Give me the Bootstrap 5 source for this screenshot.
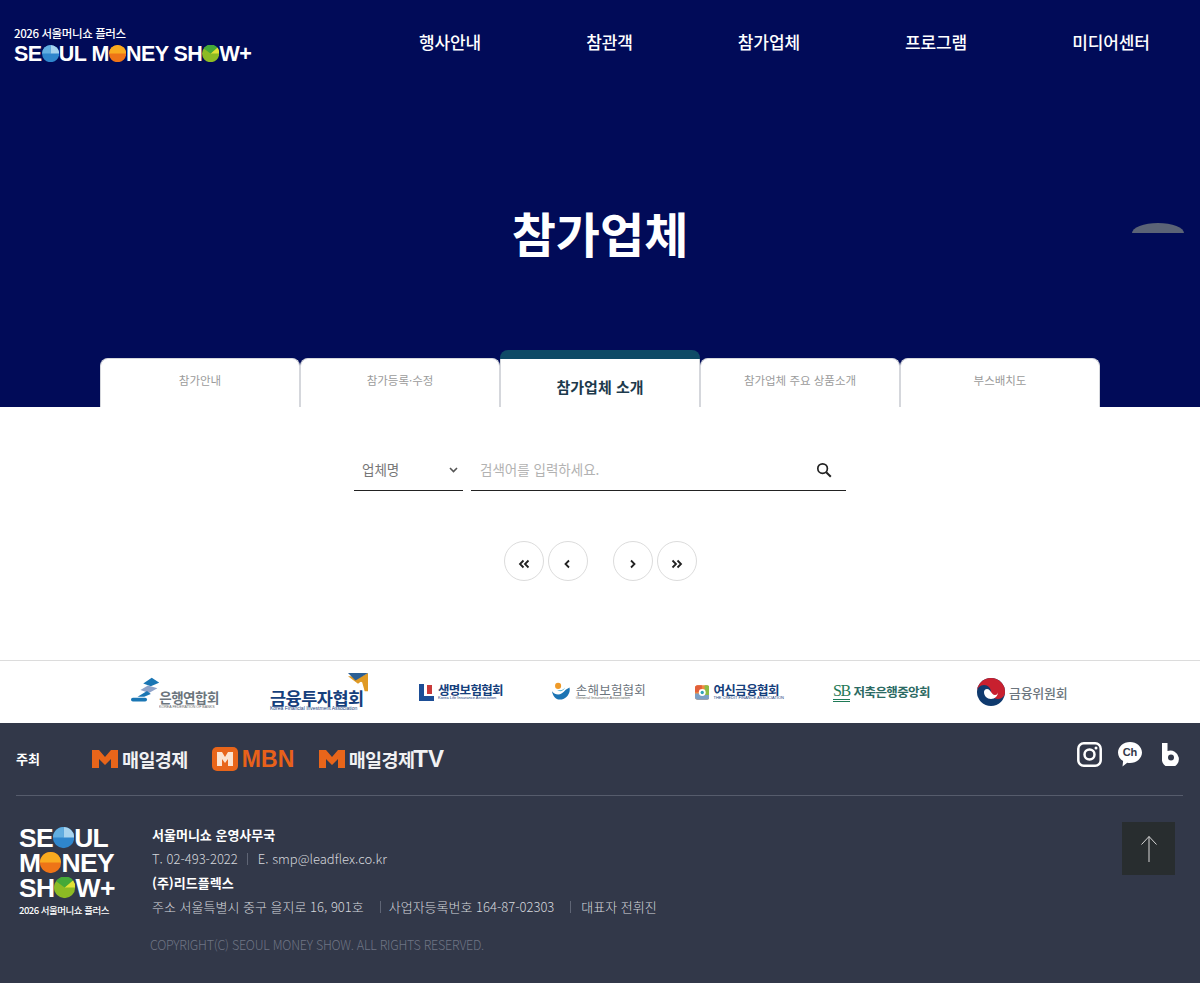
<!DOCTYPE html>
<html lang="ko">
<head>
  <meta charset="UTF-8">
  <meta name="viewport" content="width=device-width, initial-scale=1.0">
  <title>참가업체 소개 - 서울머니쇼 플러스</title>
  <link href="https://cdn.jsdelivr.net/npm/bootstrap@5.3.0/dist/css/bootstrap.min.css" rel="stylesheet">
  <style>
    body {
      font-family: "Noto Sans CJK KR", "Noto Sans", sans-serif;
      background-color: #fff;
      overflow-x: hidden;
    }
    .hero {
      position: relative;
      height: 407px;
      background-color: #010b58;
      color: #fff;
    }
    .top-bar {
      height: 84px;
      padding-left: 14px;
    }
    .brand-logo {
      width: 405px;
      padding-top: 28px;
      line-height: 1;
    }
    .brand-sub {
      font-size: 11.5px;
      font-weight: 500;
      letter-spacing: -.4px;
      height: 14px;
    }
    .word {
      font-family: "Liberation Sans", sans-serif;
      font-weight: 700;
      white-space: nowrap;
    }
    .brand-word {
      font-size: 21.5px;
      letter-spacing: -.55px;
      margin-top: 2px;
    }
    .word svg {
      width: .8em;
      height: .8em;
      vertical-align: -.06em;
    }
    .top-menu {
      gap: 105px;
      padding-top: 30px;
    }
    .top-menu a {
      color: #fff;
      font-size: 17px;
      font-weight: 500;
      line-height: 24px;
      text-decoration: none;
      letter-spacing: -.1px;
    }
    .hero-title {
      margin: 109px 0 0;
      font-size: 48px;
      line-height: 78px;
      font-weight: 700;
      text-align: center;
    }
    .hero-dome {
      position: absolute;
      top: 223px;
      left: 1132px;
      width: 52px;
      height: 10px;
      border-radius: 50% 50% 0 0 / 100% 100% 0 0;
      background-color: #5b6376;
    }
    .tab-row {
      position: absolute;
      left: 100px;
      right: 100px;
      bottom: 0;
      align-items: flex-end;
    }
    .tab-item {
      width: 200px;
      height: 49px;
      padding-bottom: 4px;
      border: 1px solid #d5d7dc;
      border-bottom: 0;
      border-radius: 8px 8px 0 0;
      background-color: #fff;
      color: #9b9b9b;
      font-size: 11.5px;
      text-decoration: none;
    }
    .tab-item.on {
      position: relative;
      padding: 8px 0 0;
      color: #1d3a4c;
      font-size: 15px;
      font-weight: 700;
      border-radius: 0;
    }
    .tab-item.on::before {
      content: "";
      position: absolute;
      left: -1px;
      right: -1px;
      top: -9px;
      height: 9px;
      border-radius: 8px 8px 0 0;
      background-color: #0e4a66;
    }
    .page-body {
      height: 254px;
      border-bottom: 1px solid #dcdcdc;
      padding-top: 42px;
    }
    .search-row {
      gap: 8px;
      height: 42px;
    }
    .kind-select {
      width: 109px;
      padding-left: 8px;
      padding-right: 5px;
      border-bottom: 1px solid #222;
      color: #777;
      font-size: 13.5px;
    }
    .word-input {
      width: 375px;
      padding: 0 14px 0 9px;
      border-bottom: 1px solid #222;
    }
    .word-input input {
      border: 0;
      outline: 0;
      padding: 0;
      background: transparent;
      font-size: 13.5px;
      color: #333;
    }
    .word-input input::placeholder {
      color: #b2b2b2;
      opacity: 1;
    }
    .pager {
      margin-top: 50px;
    }
    .pager-btn {
      width: 40px;
      height: 40px;
      padding: 0;
      border: 1px solid #dcdcdc;
      border-radius: 50%;
      background-color: #fff;
    }
    .pager-gap {
      width: 17px;
    }
    .org-strip {
      height: 62px;
      gap: 49px;
      padding-left: 131px;
    }
    .org-logo {
      height: 62px;
      flex: none;
      white-space: nowrap;
      line-height: 1;
    }
    .org-name {
      font-weight: 700;
      letter-spacing: -.5px;
    }
    .org-en {
      font-family: "Liberation Sans", sans-serif;
      font-size: 4px;
      letter-spacing: 0;
      color: #666;
      white-space: nowrap;
    }
    .site-footer {
      position: relative;
      height: 260px;
      padding: 0 17px 0 16px;
      background-color: #323849;
      color: #d5d7dc;
    }
    .host-row {
      height: 73px;
      border-bottom: 1px solid #565c6c;
    }
    .host-label {
      width: 76px;
      font-size: 13px;
      font-weight: 700;
      color: #fff;
    }
    .host-logo {
      margin-right: 24px;
      color: #f1f1f3;
      font-size: 18.5px;
      font-weight: 700;
      letter-spacing: -.6px;
      line-height: 24px;
    }
    .host-logo svg {
      margin-right: 4px;
    }
    .mbn-word {
      font-family: "Liberation Sans", sans-serif;
      font-size: 23px;
      font-weight: 700;
      letter-spacing: .2px;
      color: #e8611a;
    }
    .tv-word {
      font-family: "Liberation Sans", sans-serif;
      font-size: 24px;
      letter-spacing: 0;
      margin-left: -1px;
    }
    .social-row {
      position: absolute;
      top: 19px;
      right: 20px;
      gap: 16px;
    }
    .foot-main {
      padding-top: 27px;
    }
    .foot-logo {
      width: 136px;
      padding: 3px 0 0 3px;
      color: #fff;
    }
    .foot-word {
      font-size: 26.5px;
      line-height: 25px;
      letter-spacing: -.7px;
    }
    .foot-sub {
      margin-top: 3px;
      font-size: 9.5px;
      font-weight: 500;
      letter-spacing: -.5px;
      line-height: 13px;
    }
    .foot-info {
      font-size: 13px;
      line-height: 24px;
      font-weight: 300;
      white-space: nowrap;
    }
    .foot-info strong {
      display: block;
      color: #fff;
      font-weight: 700;
    }
    .split {
      display: inline-block;
      width: 1px;
      height: 12px;
      margin: 0 10px 0 9px;
      background-color: #5f6575;
      vertical-align: -1px;
    }
    .copy-line {
      margin-top: 14px;
      color: #6f7585;
      font-size: 12.5px;
      letter-spacing: -.25px;
      margin-left: -2px;
    }
    .top-btn {
      position: absolute;
      top: 99px;
      left: 1122px;
      width: 53px;
      height: 53px;
      padding: 0;
      border: 0;
      background-color: #282d2f;
    }
  </style>
</head>
<body>
  <svg width="0" height="0" class="d-block">
    <defs>
      <symbol id="pieBlue" viewBox="0 0 20 20">
        <circle cx="10" cy="10" r="10" fill="#2f86cc"/>
        <path d="M10 10V0a10 10 0 0 1 10 10z" fill="#a8d4ee"/>
        <path d="M10 10H0a10 10 0 0 1 10-10z" fill="#62aee0"/>
      </symbol>
      <symbol id="pieOrange" viewBox="0 0 20 20">
        <circle cx="10" cy="10" r="10" fill="#ee7417"/>
        <path d="M0 10a10 10 0 0 1 20 0z" fill="#f9ab1f"/>
      </symbol>
      <symbol id="pieGreen" viewBox="0 0 20 20">
        <circle cx="10" cy="10" r="10" fill="#8dbb24"/>
        <path d="M10 10L18 3a10 10 0 0 1 2 7z" fill="#e0e236"/>
        <path d="M10 10L18 3a10 10 0 0 0-16 1z" fill="#45a938"/>
      </symbol>
      <symbol id="mMark" viewBox="0 0 26 18">
        <path d="M0 0h7l6 7 6-7h7v18h-7V9l-6 6-6-6v9H0z" fill="#e8651a"/>
      </symbol>
    </defs>
  </svg>

  <header class="hero">
    <div class="top-bar d-flex">
      <div class="brand-logo">
        <div class="brand-sub">2026 서울머니쇼 플러스</div>
        <div class="word brand-word">SE<svg><use href="#pieBlue"/></svg>UL M<svg><use href="#pieOrange"/></svg>NEY SH<svg><use href="#pieGreen"/></svg>W+</div>
      </div>
      <nav class="top-menu d-flex">
        <a href="#">행사안내</a>
        <a href="#">참관객</a>
        <a href="#">참가업체</a>
        <a href="#">프로그램</a>
        <a href="#">미디어센터</a>
      </nav>
    </div>
    <h1 class="hero-title">참가업체</h1>
    <div class="hero-dome"></div>
    <div class="tab-row d-flex">
      <a href="#" class="tab-item d-flex align-items-center justify-content-center">참가안내</a>
      <a href="#" class="tab-item d-flex align-items-center justify-content-center">참가등록·수정</a>
      <a href="#" class="tab-item on d-flex align-items-center justify-content-center">참가업체 소개</a>
      <a href="#" class="tab-item d-flex align-items-center justify-content-center">참가업체 주요 상품소개</a>
      <a href="#" class="tab-item d-flex align-items-center justify-content-center">부스배치도</a>
    </div>
  </header>

  <main class="page-body">
    <form class="search-row d-flex justify-content-center">
      <div class="kind-select d-flex align-items-center justify-content-between">
        <span>업체명</span>
        <svg width="9" height="6" viewBox="0 0 9 6"><path d="M1 1l3.5 3.5L8 1" fill="none" stroke="#555" stroke-width="1.6"/></svg>
      </div>
      <div class="word-input d-flex align-items-center justify-content-between">
        <input type="text" class="flex-grow-1" placeholder="검색어를 입력하세요.">
        <svg width="16" height="16" viewBox="0 0 16 16"><circle cx="6.6" cy="6.6" r="4.8" fill="none" stroke="#222" stroke-width="1.7"/><path d="M10.2 10.2l4.6 4.6" stroke="#222" stroke-width="2"/></svg>
      </div>
    </form>
    <div class="pager d-flex justify-content-center gap-1">
      <button type="button" class="pager-btn" aria-label="처음"><svg width="12" height="10" viewBox="0 0 12 10"><path d="M5.5 1.5L2 5l3.5 3.5M10.5 1.5L7 5l3.5 3.5" fill="none" stroke="#222" stroke-width="1.8"/></svg></button>
      <button type="button" class="pager-btn" aria-label="이전"><svg width="7" height="10" viewBox="0 0 7 10"><path d="M5 1.5L1.5 5 5 8.5" fill="none" stroke="#222" stroke-width="1.8"/></svg></button>
      <span class="pager-gap"></span>
      <button type="button" class="pager-btn" aria-label="다음"><svg width="7" height="10" viewBox="0 0 7 10"><path d="M2 1.5L5.5 5 2 8.5" fill="none" stroke="#222" stroke-width="1.8"/></svg></button>
      <button type="button" class="pager-btn" aria-label="마지막"><svg width="12" height="10" viewBox="0 0 12 10"><path d="M1.5 1.5L5 5 1.5 8.5M6.5 1.5L10 5 6.5 8.5" fill="none" stroke="#222" stroke-width="1.8"/></svg></button>
    </div>
  </main>

  <section class="org-strip d-flex align-items-center">
    <div class="org-logo d-flex align-items-center" style="width:90px">
      <svg width="30" height="36" viewBox="0 0 30 36" class="me-n1 flex-none"><path d="M13 9L22 3l8 5-9 4z" fill="#1a76b4"/><path d="M10 16l8-5 10 3-9 5z" fill="#8fa3c9"/><path d="M7 23l10-6 4 3-7 3z" fill="#1a76b4"/><rect x="0" y="24" width="17" height="4" rx="2" fill="#1a76b4"/></svg>
      <div class="ms-n1 pt-3"><div class="org-name text-secondary" style="font-size:13.5px">은행연합회</div><div class="org-en" style="transform:scale(.9);transform-origin:left">KOREA FEDERATION OF BANKS</div></div>
    </div>
    <div class="org-logo d-flex align-items-center position-relative" style="width:100px">
      <div class="pt-3"><div class="org-name" style="font-size:17.5px;color:#16407c">금융투자협회</div><div class="org-en" style="color:#16407c;font-size:5px">Korea Financial Investment Association</div></div>
      <svg width="24" height="24" viewBox="0 0 24 24" class="position-absolute top-0 end-0 mt-2 pt-1" style="overflow:visible"><path d="M0 4h24L12 13z" fill="#e09a24"/><path d="M24 0L9 8l8 3 3 11h4z" fill="#e09a24"/><path d="M0 0h24L9 9z" fill="#2b5f94"/></svg>
    </div>
    <div class="org-logo d-flex align-items-center" style="width:84px">
      <svg width="15" height="17" viewBox="0 0 15 17" class="me-1"><path d="M0 0h5v12h10v5H0z" fill="#1d4e96"/><rect x="8" y="1" width="5" height="9" fill="#c93a3a"/></svg>
      <div><div class="org-name" style="font-size:12.5px;color:#16407c;letter-spacing:-.7px">생명보험협회</div><div class="org-en" style="color:#16407c">Korea Life Insurance Association</div></div>
    </div>
    <div class="org-logo d-flex align-items-center" style="width:94px">
      <svg width="26" height="26" viewBox="0 0 26 26" class="me-1"><circle cx="8" cy="5" r="4" fill="#ef9a28"/><path d="M0 12c5 6 12 6 18-2l5-3c2 8-5 16-13 16-5 0-9-5-10-11z" fill="#1b74b4"/><path d="M7 10c4 2 8 0 10-3-1 4-7 7-10 3z" fill="#3aa6cc"/></svg>
      <div><div class="org-name text-secondary fw-normal" style="font-size:12.5px;letter-spacing:.2px">손해보험협회</div><div class="org-en">General Insurance Association</div></div>
    </div>
    <div class="org-logo d-flex align-items-center" style="width:89px">
      <svg width="21" height="21" viewBox="0 0 21 21" class="me-1"><rect width="21" height="21" rx="4" fill="#f08b3e"/><path d="M0 12h21v5a4 4 0 0 1-4 4H4a4 4 0 0 1-4-4z" fill="#7c9fc4"/><path d="M0 4a4 4 0 0 1 4-4h6v10H0z" fill="#e2603a"/><path d="M14 0h3a4 4 0 0 1 4 4v10h-7z" fill="#8dbb44"/><circle cx="10.5" cy="10.5" r="5" fill="#fff"/><circle cx="10.5" cy="10.5" r="2.4" fill="#2fa3b5"/></svg>
      <div><div class="org-name" style="font-size:12.5px;color:#16407c;letter-spacing:-.6px">여신금융협회</div><div class="org-en" style="color:#16407c">THE CREDIT FINANCE ASSOCIATION</div></div>
    </div>
    <div class="org-logo d-flex align-items-center" style="width:95px">
      <div class="word text-center me-1" style="font-family:'Liberation Serif',serif;font-size:16px;font-weight:400;color:#1f7a56;line-height:16px;border-bottom:3px double #1f7a56;letter-spacing:-1.5px">SB</div>
      <div class="org-name" style="font-size:12.5px;color:#2b6a63;letter-spacing:-.6px">저축은행중앙회</div>
    </div>
    <div class="org-logo d-flex align-items-center" style="width:91px">
      <svg width="28" height="28" viewBox="0 0 28 28" class="me-1"><circle cx="14" cy="14" r="14" fill="#0f3a6e"/><path d="M0 14a14 14 0 0 1 28 0c0 4-3 7-7 7s-7-3-7-7-3-7-7-7-7 3-7 7z" fill="#c8202f"/><circle cx="21" cy="14" r="7" fill="#fff" opacity="0"/><path d="M7 14c0-1.500 1-3 3-3s3 1.500 4 3 2 3 4 3 3-1.500 3-3c0 4-3 7-7 7s-7-3-7-7z" fill="#fff"/></svg>
      <div class="org-name text-secondary fw-medium" style="font-size:13px;letter-spacing:-.3px">금융위원회</div>
    </div>
  </section>

  <footer class="site-footer">
    <div class="host-row d-flex align-items-center">
      <div class="host-label">주최</div>
      <div class="host-logo d-flex align-items-center"><svg width="26" height="18"><use href="#mMark"/></svg>매일경제</div>
      <div class="host-logo d-flex align-items-center">
        <svg width="26" height="24" viewBox="0 0 26 24"><rect width="26" height="24" rx="5" fill="#e8651a"/><path d="M5 5h5l3 5 3-5h5v14h-5v-7l-3 4-3-4v7H5z" fill="#fbe3d0"/></svg>
        <span class="mbn-word">MBN</span>
      </div>
      <div class="host-logo d-flex align-items-center"><svg width="26" height="18"><use href="#mMark"/></svg>매일경제<span class="tv-word">TV</span></div>
    </div>
    <div class="social-row d-flex align-items-center">
      <svg width="25" height="25" viewBox="0 0 25 25"><rect x="1.300" y="1.300" width="22.400" height="22.400" rx="5.500" fill="none" stroke="#fff" stroke-width="2.500"/><circle cx="12.500" cy="12.500" r="5" fill="none" stroke="#fff" stroke-width="2.500"/><circle cx="19" cy="6" r="1.500" fill="#fff"/></svg>
      <svg width="24" height="25" viewBox="0 0 24 25"><path d="M12 0c6.600 0 12 4.700 12 10.500S18.600 21 12 21c-1 0-2 0-2.800-.3L4.500 24.500l.6-5.400C2 17.200 0 14 0 10.500 0 4.700 5.400 0 12 0z" fill="#fff"/><text x="12" y="14" text-anchor="middle" font-family="Liberation Sans, sans-serif" font-size="11" font-weight="700" fill="#323849">Ch</text></svg>
      <svg class="ms-1" width="18" height="23" viewBox="0 0 18 23"><path d="M0 0h5.500v8A8.500 8.500 0 1 1 0 14.500z" fill="#fff"/><circle cx="9" cy="14.500" r="3" fill="#323849"/></svg>
    </div>
    <div class="foot-main d-flex">
      <div class="foot-logo">
        <div class="word foot-word">SE<svg><use href="#pieBlue"/></svg>UL</div>
        <div class="word foot-word">M<svg><use href="#pieOrange"/></svg>NEY</div>
        <div class="word foot-word">SH<svg><use href="#pieGreen"/></svg>W+</div>
        <div class="foot-sub">2026 서울머니쇼 플러스</div>
      </div>
      <div class="foot-info">
        <strong>서울머니쇼 운영사무국</strong>
        <div>T. 02-493-2022<span class="split"></span>E. smp@leadflex.co.kr</div>
        <strong>(주)리드플렉스</strong>
        <div>주소 서울특별시 중구 을지로 16, 901호<span class="split mx-2 px-0 ms-3"></span>사업자등록번호 164-87-02303<span class="split ms-3"></span>대표자 전휘진</div>
        <div class="copy-line">COPYRIGHT(C) SEOUL MONEY SHOW. ALL RIGHTS RESERVED.</div>
      </div>
    </div>
    <button type="button" class="top-btn d-flex align-items-center justify-content-center" aria-label="맨 위로">
      <svg width="18" height="28" viewBox="0 0 18 28"><path d="M9 27V1.500M1.500 9.500L9 1.500l7.500 8" fill="none" stroke="#d8d8d8" stroke-width="1"/></svg>
    </button>
  </footer>
</body>
</html>
